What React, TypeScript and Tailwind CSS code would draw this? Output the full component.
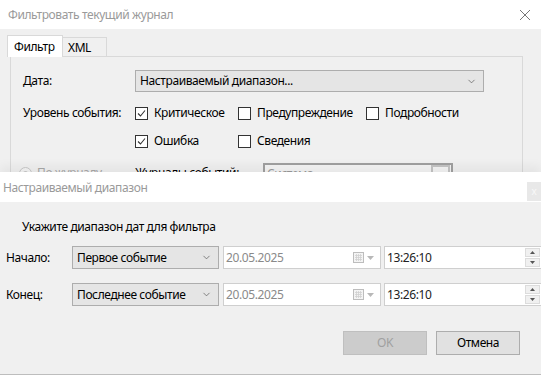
import { ChevronDown } from 'lucide-react'

const font = { fontFamily: '"Segoe UI", "Noto Sans", "Open Sans", sans-serif' }

function Check({ checked }: { checked?: boolean }) {
  return (
    <span className="w-[13px] h-[13px] border border-[#333] bg-white flex items-center justify-center shrink-0">
      {checked && (
        <svg width="9" height="9" viewBox="0 0 9 9">
          <path d="M1 4.5 L3.5 7 L8 1.5" fill="none" stroke="#333" strokeWidth="1.1" />
        </svg>
      )}
    </span>
  )
}

function CheckItem({ label, checked, w }: { label: string; checked?: boolean; w: string }) {
  return (
    <label className={`flex items-center gap-[6px] ${w}`}>
      <Check checked={checked} />
      <span>{label}</span>
    </label>
  )
}

function Combo({ text, className }: { text: string; className: string }) {
  return (
    <div className={`flex items-center justify-between bg-[#e5e5e5] border border-[#adadad] pl-[4px] pr-[6px] ${className}`}>
      <span className="text-black">{text}</span>
      <ChevronDown className="w-[11px] h-[11px] text-[#555]" strokeWidth={1.5} />
    </div>
  )
}

function DateRow({ label, combo }: { label: string; combo: string }) {
  return (
    <div className="flex items-center h-[23px]">
      <span className="w-[72px] pl-[6px]">{label}</span>
      <Combo text={combo} className="w-[147px] h-[23px]" />
      <div className="ml-[4px] w-[158px] h-[23px] bg-white border border-[#cfcfcf] flex items-center justify-between pl-[2px] pr-[6px]">
        <span className="text-[#8a8a8a]">20.05.2025</span>
        <span className="flex items-center gap-[3px]">
          <svg width="11" height="11" viewBox="0 0 11 11">
            <rect x="0.5" y="0.5" width="10" height="10" fill="#f4f4f4" stroke="#bdbdbd" />
            <path d="M2 3.5 H9 M2 5.5 H9 M2 7.5 H9 M3.5 2 V9 M5.5 2 V9 M7.5 2 V9" stroke="#d0d0d0" strokeWidth="0.8" />
          </svg>
          <svg width="7" height="4" viewBox="0 0 7 4">
            <path d="M0 0 H7 L3.5 4 Z" fill="#b8b8b8" />
          </svg>
        </span>
      </div>
      <div className="ml-[3px] flex-1 h-[23px] bg-white border border-[#cfcfcf] border-r-0 flex items-center justify-between pl-[2px]">
        <span className="text-[#222]">13:26:10</span>
        <span className="flex flex-col gap-[1px] pr-[1px]">
          <span className="w-[15px] h-[9px] bg-[#f0f0f0] border border-[#dcdcdc] flex items-center justify-center">
            <svg width="5" height="3" viewBox="0 0 5 3"><path d="M0 3 H5 L2.5 0 Z" fill="#555" /></svg>
          </span>
          <span className="w-[15px] h-[9px] bg-[#f0f0f0] border border-[#dcdcdc] flex items-center justify-center">
            <svg width="5" height="3" viewBox="0 0 5 3"><path d="M0 0 H5 L2.5 3 Z" fill="#555" /></svg>
          </span>
        </span>
      </div>
    </div>
  )
}

export default function App() {
  return (
    <div className="w-[541px] h-[375px] relative overflow-hidden bg-[#f0f0f0] text-[12px] tracking-[-0.4px] text-black" style={font}>
      {/* background dialog */}
      <div className="h-[29px] bg-white flex items-center justify-between pl-[8px] pr-[10px]">
        <span className="text-[#9a9a9a]">Фильтровать текущий журнал</span>
        <svg width="12" height="12" viewBox="0 0 12 12">
          <path d="M1 1 L11 11 M11 1 L1 11" stroke="#777" strokeWidth="1" />
        </svg>
      </div>
      <div className="pl-[7px] pt-[6px] pr-[18px]">
        <div className="flex items-end h-[22px]">
          <div className="h-[22px] w-[56px] bg-white border border-[#d9d9d9] border-b-0 flex items-center pl-[6px] relative z-10">
            Фильтр
          </div>
          <div className="h-[20px] w-[44px] border border-[#d9d9d9] border-l-0 border-b-0 flex items-center pl-[5px]">XML</div>
        </div>
        <div className="ml-[3px] h-[160px] border border-[#d9d9d9] -mt-px pt-[13px] pl-[12px]">
          <div className="flex items-center h-[22px]">
            <span className="w-[112px]">Дата:</span>
            <Combo text="Настраиваемый диапазон..." className="w-[349px] h-[22px]" />
          </div>
          <div className="flex items-center h-[14px] mt-[14px]">
            <span className="w-[112px]">Уровень события:</span>
            <CheckItem label="Критическое" checked w="w-[103px]" />
            <CheckItem label="Предупреждение" w="w-[128px]" />
            <CheckItem label="Подробности" w="w-[100px]" />
          </div>
          <div className="flex items-center h-[14px] mt-[14px]">
            <span className="w-[112px]" />
            <CheckItem label="Ошибка" checked w="w-[103px]" />
            <CheckItem label="Сведения" w="w-[100px]" />
          </div>
          <div className="flex items-center h-[20px] mt-[15px] -ml-[4px]">
            <span className="w-[13px] h-[13px] rounded-full border border-[#c8c8c8] bg-[#f4f4f4] flex items-center justify-center mr-[5px]">
              <span className="w-[5px] h-[5px] rounded-full bg-[#c8c8c8]" />
            </span>
            <span className="w-[98px] text-[#a8a8a8]">По журналу</span>
            <span className="w-[128px]">Журналы событий:</span>
            <div className="w-[190px] h-[20px] border-2 border-[#a0a0a0] bg-[#f4f4f4] flex items-start justify-between pl-[2px] text-[#9a9a9a]">
              <span>Система</span>
              <span className="w-[19px] h-[16px] border-2 border-[#c4c4c4] mr-[1px]" />
            </div>
          </div>
        </div>
      </div>

      {/* foreground dialog */}
      <div className="absolute left-0 top-[172px] w-[541px] h-[203px] bg-[#f0f0f0] border-b border-[#bdbdbd] shadow-[0_-6px_10px_rgba(0,0,0,0.05)] flex flex-col">
        <div className="h-[30px] bg-white flex items-center justify-between pl-[3px]">
          <span className="text-[#9a9a9a] pt-[2px]">Настраиваемый диапазон</span>
          <span className="w-[14px] h-[19px] mt-[8px] bg-[#e8e8e8] flex items-center justify-center text-[#f8f8f8] text-[10px]">x</span>
        </div>
        <div className="pl-[22px] mt-[16px]">Укажите диапазон дат для фильтра</div>
        <div className="mt-[10px] flex flex-col gap-[14px]">
          <DateRow label="Начало:" combo="Первое событие" />
          <DateRow label="Конец:" combo="Последнее событие" />
        </div>
        <div className="flex justify-end gap-[9px] pr-[21px] mt-[25px]">
          <button className="w-[84px] h-[24px] bg-[#cccccc] border border-[#bfbfbf] text-[#a0a0a0]">OK</button>
          <button className="w-[84px] h-[24px] bg-[#e1e1e1] border border-[#adadad]">Отмена</button>
        </div>
      </div>
    </div>
  )
}
